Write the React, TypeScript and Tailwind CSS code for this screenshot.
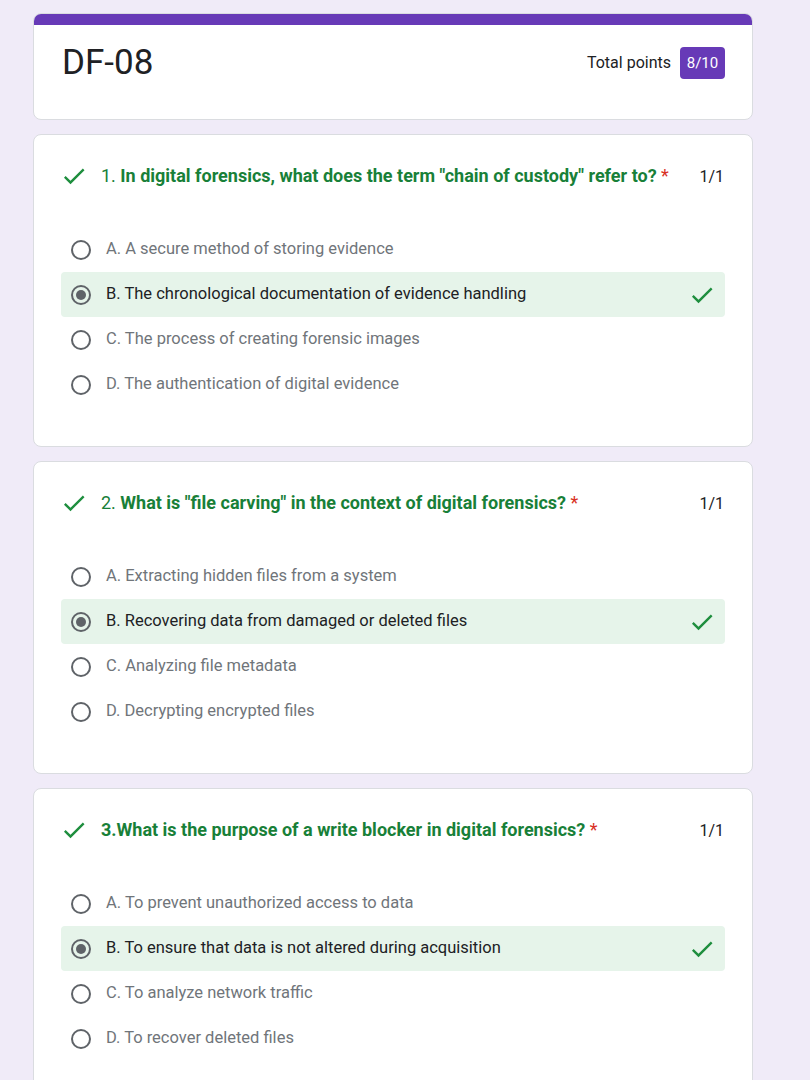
import React from "react";

type Question = {
  num: string;
  text: string;
  options: string[];
  selected: number;
};

const questions: Question[] = [
  {
    num: "1. ",
    text: 'In digital forensics, what does the term "chain of custody" refer to?',
    options: [
      "A. A secure method of storing evidence",
      "B. The chronological documentation of evidence handling",
      "C. The process of creating forensic images",
      "D. The authentication of digital evidence",
    ],
    selected: 1,
  },
  {
    num: "2. ",
    text: 'What is "file carving" in the context of digital forensics?',
    options: [
      "A. Extracting hidden files from a system",
      "B. Recovering data from damaged or deleted files",
      "C. Analyzing file metadata",
      "D. Decrypting encrypted files",
    ],
    selected: 1,
  },
  {
    num: "",
    text: "3.What is the purpose of a write blocker in digital forensics?",
    options: [
      "A. To prevent unauthorized access to data",
      "B. To ensure that data is not altered during acquisition",
      "C. To analyze network traffic",
      "D. To recover deleted files",
    ],
    selected: 1,
  },
];

const CheckIcon: React.FC<{ className?: string }> = ({ className }) => (
  <svg viewBox="0 0 24 24" className={className} fill="currentColor">
    <path d="M9 16.17L4.83 12l-1.42 1.41L9 19 21 7l-1.41-1.41z" />
  </svg>
);

const Radio: React.FC<{ checked: boolean }> = ({ checked }) => (
  <div className="w-5 h-5 rounded-full border-2 border-[#5f6368] flex items-center justify-center shrink-0">
    {checked && <div className="w-2.5 h-2.5 rounded-full bg-[#5f6368]" />}
  </div>
);

const QuestionCard: React.FC<{ q: Question }> = ({ q }) => (
  <div className="bg-white border border-[#dadce0] rounded-lg px-[27px] pt-[29px] pb-[39px]">
    <div className="flex items-center h-6 pr-[1px]">
      <CheckIcon className="w-[28px] h-[28px] text-[#1e8e3e] -ml-[1px] shrink-0" />
      <div className="ml-[13px] flex-1 text-[18px] text-[#188038] whitespace-nowrap -mt-[1px]">
        {q.num && <span>{q.num}</span>}
        <span className="font-bold">{q.text}</span>
        <span className="text-[#d93025]"> *</span>
      </div>
      <span className="text-[16px] text-[#202124] mt-[1px]">1/1</span>
    </div>
    <div className="mt-[39px] flex flex-col">
      {q.options.map((opt, i) => {
        const sel = i === q.selected;
        return (
          <div
            key={i}
            className={`h-[45px] flex items-center pl-[10px] pr-[9px] rounded ${
              sel ? "bg-[#e6f4ea]" : ""
            }`}
          >
            <Radio checked={sel} />
            <span
              className={`ml-[15px] flex-1 text-[16.5px] ${
                sel ? "text-[#202124]" : "text-[#70757a]"
              }`}
            >
              {opt}
            </span>
            {sel && <CheckIcon className="w-[28px] h-[28px] text-[#1e8e3e]" />}
          </div>
        );
      })}
    </div>
  </div>
);

export default function App() {
  return (
    <div
      className="min-h-screen bg-[#f0ebf8] pt-[13px] pl-[33px]"
      style={{ fontFamily: "Roboto, 'Liberation Sans', sans-serif" }}
    >
      <div className="w-[720px] flex flex-col gap-[14px]">
        <div className="bg-white border border-[#dadce0] rounded-lg overflow-hidden">
          <div className="h-[12px] bg-[#673ab7] -mx-px -mt-px" />
          <div className="flex items-center justify-between pl-[28px] pr-[27px] pt-[18px] pb-[36px]">
            <h1 className="text-[35px] leading-[40px] text-[#202124]">DF-08</h1>
            <div className="flex items-center gap-[9px]">
              <span className="text-[16px] text-[#202124]">Total points</span>
              <span className="bg-[#673ab7] text-white text-[15px] rounded px-[4px] h-[32px] w-[45px] flex items-center justify-center">
                8/10
              </span>
            </div>
          </div>
        </div>
        {questions.map((q, i) => (
          <QuestionCard key={i} q={q} />
        ))}
      </div>
    </div>
  );
}
